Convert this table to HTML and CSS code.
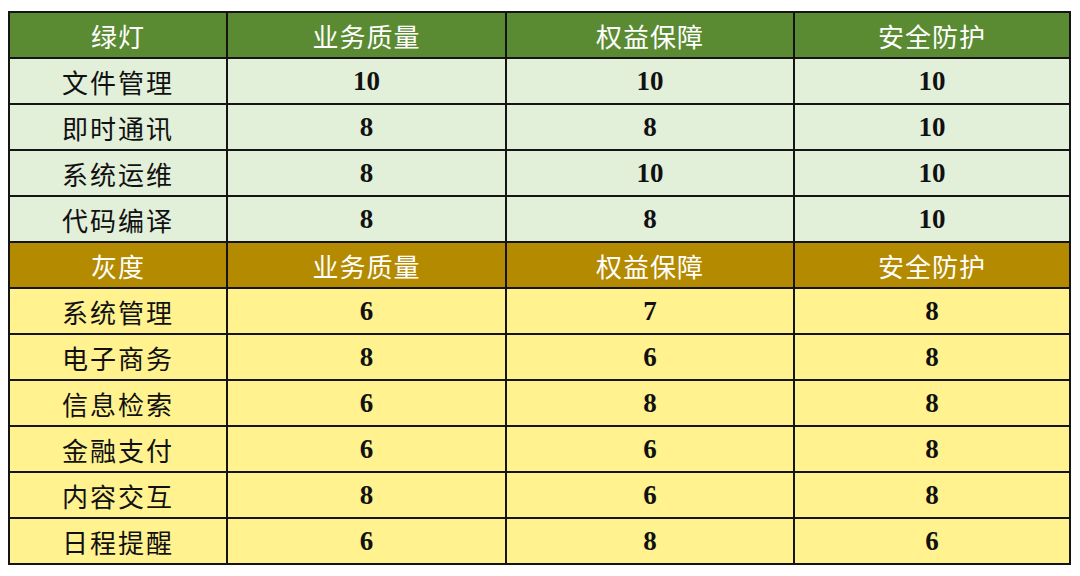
FILE: index.html
```html
<!DOCTYPE html>
<html lang="zh">
<head>
<meta charset="utf-8">
<link rel="stylesheet" href="styles.css">
</head>
<body>
<table class="grid">
  <colgroup>
    <col class="c1"><col class="c2"><col class="c3"><col class="c4">
  </colgroup>
  <tr class="head green-head">
    <th>绿灯</th><th>业务质量</th><th>权益保障</th><th>安全防护</th>
  </tr>
  <tr class="green"><td class="label">文件管理</td><td>10</td><td>10</td><td>10</td></tr>
  <tr class="green"><td class="label">即时通讯</td><td>8</td><td>8</td><td>10</td></tr>
  <tr class="green"><td class="label">系统运维</td><td>8</td><td>10</td><td>10</td></tr>
  <tr class="green"><td class="label">代码编译</td><td>8</td><td>8</td><td>10</td></tr>
  <tr class="head gold-head">
    <th>灰度</th><th>业务质量</th><th>权益保障</th><th>安全防护</th>
  </tr>
  <tr class="yellow"><td class="label">系统管理</td><td>6</td><td>7</td><td>8</td></tr>
  <tr class="yellow"><td class="label">电子商务</td><td>8</td><td>6</td><td>8</td></tr>
  <tr class="yellow"><td class="label">信息检索</td><td>6</td><td>8</td><td>8</td></tr>
  <tr class="yellow"><td class="label">金融支付</td><td>6</td><td>6</td><td>8</td></tr>
  <tr class="yellow"><td class="label">内容交互</td><td>8</td><td>6</td><td>8</td></tr>
  <tr class="yellow"><td class="label">日程提醒</td><td>6</td><td>8</td><td>6</td></tr>
</table>
</body>
</html>
```
FILE: styles.css
```css
html, body {
  margin: 0;
  padding: 0;
  background: #ffffff;
}
body {
  padding: 11px 0 0 8px;
}
.grid {
  border-collapse: collapse;
  width: 1061px;
  table-layout: fixed;
}
.c1 { width: 218px; }
.c2 { width: 279px; }
.c3 { width: 288px; }
.c4 { width: 276px; }
.grid th, .grid td {
  border: 2px solid #151515;
  height: 44px;
  padding: 0;
  text-align: center;
  vertical-align: middle;
}
.grid th {
  font-family: "Noto Sans CJK SC", sans-serif;
  font-weight: 400;
  font-size: 26px;
  color: #ffffff;
  letter-spacing: 1px;
}
.grid td {
  font-family: "Liberation Serif", serif;
  font-weight: 700;
  font-size: 27px;
  color: #111111;
}
.grid td.label {
  font-family: "Noto Sans CJK SC", sans-serif;
  font-weight: 400;
  font-size: 26px;
  letter-spacing: 2px;
  color: #111111;
}
.green-head th { background: #5a8b32; }
.gold-head th { background: #b48a00; }
.green td { background: #e2efd9; }
.yellow td { background: #fff28f; }
```
